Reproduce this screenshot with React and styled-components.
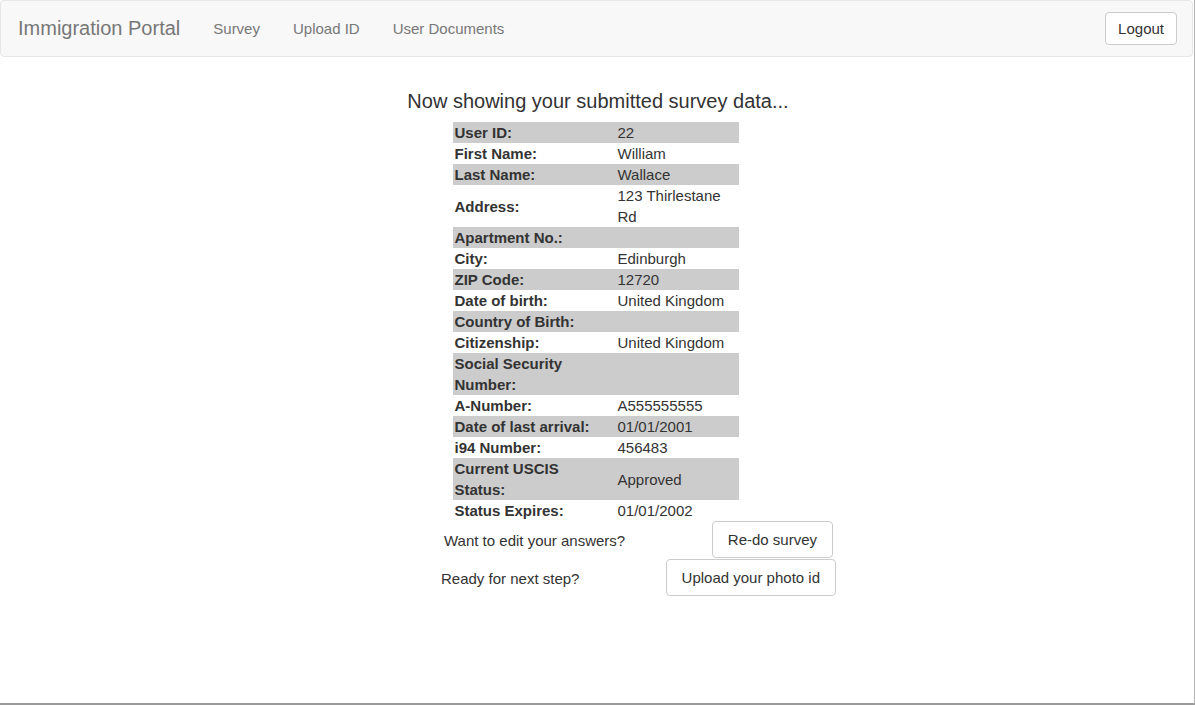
import React from "react";
import styled, { createGlobalStyle } from "styled-components";

const Global = createGlobalStyle`
  html, body { margin: 0; padding: 0; background: #fff; }
  body {
    font-family: "Liberation Sans", Arial, Helvetica, sans-serif;
    font-size: 15px;
    color: #333;
  }
  * { box-sizing: border-box; }
  table, th, td, button { font-family: "Liberation Sans", Arial, Helvetica, sans-serif; }
`;

const Page = styled.div`
  width: 1195px;
  height: 705px;
  border-right: 1px solid #b4b4b4;
  border-bottom: 2px solid #9a9a9a;
  overflow: hidden;
`;

const Navbar = styled.nav`
  width: 1193px;
  height: 57px;
  background: #f8f8f8;
  border: 1px solid #e7e7e7;
  border-radius: 4px;
  display: flex;
  align-items: center;
  padding-right: 15px;
`;

const Brand = styled.a`
  font-size: 20px;
  color: #777;
  padding: 0 17px 0 17px;
  text-decoration: none;
  cursor: pointer;
`;

const NavList = styled.ul`
  display: flex;
  list-style: none;
  margin: 0;
  padding: 0;
  flex: 1;
`;

const NavLink = styled.a`
  display: block;
  font-size: 15px;
  color: #777;
  padding: 0 17px;
  margin-left: -1px;
  text-decoration: none;
  cursor: pointer;
`;

const Button = styled.button`
  font-family: "Liberation Sans", Arial, Helvetica, sans-serif;
  font-size: 15px;
  line-height: 19px;
  color: #333;
  background: #fff;
  border: 1px solid #ccc;
  border-radius: 4px;
  padding: ${(p) => (p.$small ? "6px 12px" : "8px 15px")};
  cursor: pointer;
`;

const Main = styled.main`
  display: flex;
  flex-direction: column;
  align-items: center;
  padding-top: 33px;
`;

const Heading = styled.h3`
  font-size: 20px;
  font-weight: 400;
  line-height: 22px;
  margin: 0 0 10px;
  color: #333;
  padding-left: 2px;
`;

const Table = styled.table`
  border-collapse: collapse;
  table-layout: fixed;
  width: 286px;
  margin-left: -3px;
  font-family: "Liberation Sans", Arial, Helvetica, sans-serif;
  font-size: 15px;
  color: #333;
`;

const Row = styled.tr`
  background: ${(p) => (p.$shaded ? "#cccccc" : "transparent")};
`;

const Label = styled.th`
  width: 163px;
  text-align: left;
  font-size: 15px;
  font-weight: 700;
  line-height: 21px;
  padding: 0 6px 0 2px;
  vertical-align: middle;
  color: #333;
`;

const Value = styled.td`
  font-size: 15px;
  line-height: 21px;
  padding: 0 6px 0 2px;
  vertical-align: middle;
  color: #333;
`;

const Actions = styled.div`
  width: 398px;
  display: grid;
  grid-template-columns: 1fr auto;
  align-items: center;
  margin-left: 80px;
`;

const Prompt = styled.span`
  font-size: 15px;
  padding-left: ${(p) => p.$pl || 4}px;
  color: #333;
`;

const ActionCell = styled.div`
  display: flex;
  justify-content: flex-end;
  padding-right: ${(p) => p.$pr || 0}px;
  margin-bottom: 1px;
`;

const rows = [
  ["User ID:", "22"],
  ["First Name:", "William"],
  ["Last Name:", "Wallace"],
  ["Address:", "123 Thirlestane Rd"],
  ["Apartment No.:", ""],
  ["City:", "Edinburgh"],
  ["ZIP Code:", "12720"],
  ["Date of birth:", "United Kingdom"],
  ["Country of Birth:", ""],
  ["Citizenship:", "United Kingdom"],
  ["Social Security Number:", ""],
  ["A-Number:", "A555555555"],
  ["Date of last arrival:", "01/01/2001"],
  ["i94 Number:", "456483"],
  ["Current USCIS Status:", "Approved"],
  ["Status Expires:", "01/01/2002"],
];

export default function App() {
  return (
    <>
      <Global />
      <Page>
        <Navbar>
          <Brand>Immigration Portal</Brand>
          <NavList>
            <li><NavLink>Survey</NavLink></li>
            <li><NavLink>Upload ID</NavLink></li>
            <li><NavLink>User Documents</NavLink></li>
          </NavList>
          <Button $small>Logout</Button>
        </Navbar>
        <Main>
          <Heading>Now showing your submitted survey data...</Heading>
          <Table>
            <tbody>
              {rows.map(([k, v], i) => (
                <Row key={k} $shaded={i % 2 === 0}>
                  <Label>{k}</Label>
                  <Value>{v}</Value>
                </Row>
              ))}
            </tbody>
          </Table>
          <Actions>
            <Prompt $pl={6}>Want to edit your answers?</Prompt>
            <ActionCell $pr={3}>
              <Button>Re-do survey</Button>
            </ActionCell>
            <Prompt $pl={3}>Ready for next step?</Prompt>
            <ActionCell>
              <Button>Upload your photo id</Button>
            </ActionCell>
          </Actions>
        </Main>
      </Page>
    </>
  );
}
